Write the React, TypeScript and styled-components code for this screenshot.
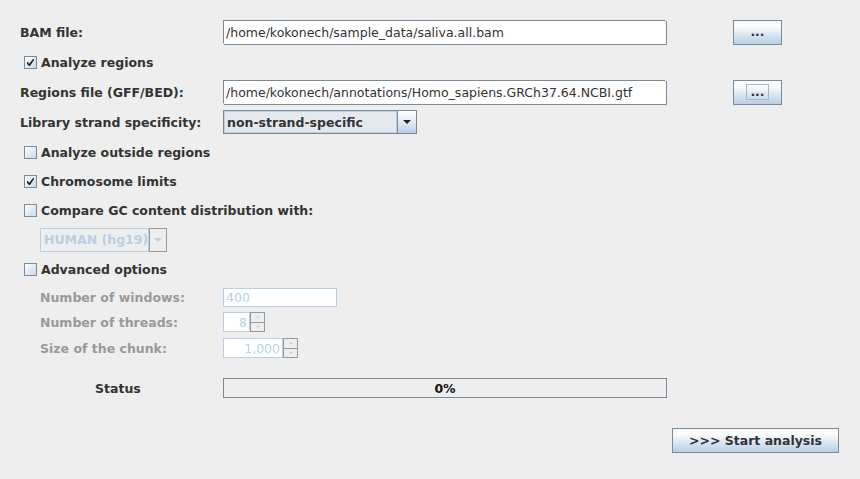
import styled, { createGlobalStyle } from "styled-components";

const GlobalStyle = createGlobalStyle`
  html, body {
    margin: 0;
    padding: 0;
    background: #eeeeee;
  }
  body {
    font-family: "DejaVu Sans", "Liberation Sans", sans-serif;
    font-size: 12.5px;
    color: #333333;
  }
`;

const Colors = {
  bg: "#eeeeee",
  text: "#333333",
  border: "#7a8a99",
  disabled: "#999999",
  disabledLight: "#b8cfe5",
};

const Panel = styled.div`
  width: 860px;
  height: 479px;
  box-sizing: border-box;
  padding: 17px 0 0 20px;
  display: flex;
  flex-direction: column;
`;

const Row = styled.div<{ $h: number; $indent?: number }>`
  height: ${(p) => p.$h}px;
  display: flex;
  align-items: center;
  padding-left: ${(p) => p.$indent ?? 0}px;
`;

const Label = styled.div<{ $disabled?: boolean; $w?: number }>`
  width: ${(p) => p.$w ?? 203}px;
  flex-shrink: 0;
  font-weight: bold;
  color: ${(p) => (p.$disabled ? Colors.disabled : Colors.text)};
  white-space: nowrap;
`;

const TextField = styled.div<{ $w: number; $disabled?: boolean; $right?: boolean }>`
  width: ${(p) => p.$w}px;
  height: 24px;
  box-sizing: border-box;
  background: #ffffff;
  border: 1px solid ${(p) => (p.$disabled ? Colors.disabledLight : Colors.border)};
  border-right-color: ${(p) => (p.$disabled ? Colors.disabledLight : "#ffffff")};
  border-bottom-color: ${(p) => (p.$disabled ? Colors.disabledLight : "#ffffff")};
  box-shadow: ${(p) => (p.$disabled ? "none" : `1px 1px 0 ${Colors.border}`)};
  display: flex;
  align-items: center;
  justify-content: ${(p) => (p.$right ? "flex-end" : "flex-start")};
  padding: 0 2px;
  color: ${(p) => (p.$disabled ? Colors.disabledLight : Colors.text)};
  white-space: nowrap;
  overflow: hidden;
`;

const BrowseButton = styled.div<{ $focused?: boolean }>`
  margin-left: 67px;
  width: 49px;
  height: 25px;
  box-sizing: border-box;
  border: 1px solid ${Colors.border};
  background: linear-gradient(#f7fafd 0%, #ffffff 20%, #dde8f3 55%, #b8cfe5 100%);
  display: flex;
  align-items: center;
  justify-content: center;
  font-weight: bold;
  color: ${Colors.text};

  span {
    padding: 0 3px;
    line-height: 14px;
    border: 1px solid ${(p) => (p.$focused ? "#a3b8cc" : "transparent")};
  }
`;

const CheckRow = styled.label<{ $indent?: number }>`
  display: flex;
  align-items: center;
  gap: 4px;
  padding-left: ${(p) => p.$indent ?? 4}px;
  font-weight: bold;
  color: ${Colors.text};
`;

const Box = styled.span`
  width: 13px;
  height: 13px;
  box-sizing: border-box;
  border: 1px solid ${Colors.border};
  background: linear-gradient(135deg, #ffffff 0%, #dde8f3 60%, #c9d9ea 100%);
  display: flex;
  align-items: center;
  justify-content: center;
`;

const CheckBox = ({ checked, label }: { checked?: boolean; label: string }) => (
  <CheckRow>
    <Box>
      {checked && (
        <svg width="11" height="11" viewBox="0 0 11 11">
          <path d="M2 5 L2 7 L4 9 L5 9 L9 3 L9 2 L8 2 L4 7 L3 5 Z" fill="#222" />
        </svg>
      )}
    </Box>
    {label}
  </CheckRow>
);

const Combo = styled.div<{ $w: number; $disabled?: boolean }>`
  width: ${(p) => p.$w}px;
  height: 24px;
  box-sizing: border-box;
  display: flex;
  border: 1px solid ${(p) => (p.$disabled ? Colors.disabledLight : Colors.border)};
`;

const ComboValue = styled.div<{ $disabled?: boolean }>`
  flex: 1;
  display: flex;
  align-items: center;
  padding-left: 3px;
  font-weight: bold;
  white-space: nowrap;
  color: ${(p) => (p.$disabled ? Colors.disabledLight : Colors.text)};
  background: ${(p) => (p.$disabled ? Colors.bg : "#e3e9ef")};
  box-shadow: inset 0 0 0 1px ${(p) => (p.$disabled ? Colors.bg : "#b8cfe5")};
  border-right: 1px solid ${(p) => (p.$disabled ? Colors.disabledLight : Colors.border)};
`;

const ComboArrow = styled.div<{ $disabled?: boolean }>`
  width: 18px;
  display: flex;
  align-items: center;
  justify-content: center;
  box-sizing: border-box;
  margin: ${(p) => (p.$disabled ? "-1px -1px -1px 0" : "0")};
  width: ${(p) => (p.$disabled ? 20 : 18)}px;
  border: ${(p) => (p.$disabled ? `1px solid ${Colors.disabled}` : "none")};
  background: ${(p) =>
    p.$disabled ? Colors.bg : "linear-gradient(#ffffff 0%, #dde8f3 55%, #b8cfe5 100%)"};

  &::after {
    content: "";
    border-left: 4px solid transparent;
    border-right: 4px solid transparent;
    border-top: 4px solid ${(p) => (p.$disabled ? Colors.disabledLight : "#222")};
  }
`;

const Spinner = styled.div`
  display: flex;
  height: 20px;
`;

const SpinButtons = styled.div`
  display: flex;
  flex-direction: column;
  width: 15px;
`;

const SpinButton = styled.div<{ $down?: boolean }>`
  flex: 1;
  box-sizing: border-box;
  border: 1px solid ${Colors.disabled};
  border-top-width: ${(p) => (p.$down ? 0 : 1)}px;
  background: ${Colors.bg};
  display: flex;
  align-items: center;
  justify-content: center;

  &::after {
    content: "";
    border-left: 2px solid transparent;
    border-right: 2px solid transparent;
    ${(p) =>
      p.$down
        ? `border-top: 2px solid ${Colors.disabledLight};`
        : `border-bottom: 2px solid ${Colors.disabledLight};`}
  }
`;

const Progress = styled.div`
  width: 444px;
  height: 20px;
  box-sizing: border-box;
  border: 1px solid ${Colors.border};
  background: ${Colors.bg};
  display: flex;
  align-items: center;
  justify-content: center;
  font-weight: bold;
  color: #111;
`;

const Footer = styled.div`
  margin-top: 26px;
  padding-right: 21px;
  display: flex;
  justify-content: flex-end;
`;

const StartButton = styled.div`
  width: 167px;
  height: 25px;
  box-sizing: border-box;
  border: 1px solid ${Colors.border};
  background: linear-gradient(#f7fafd 0%, #ffffff 20%, #dde8f3 55%, #b8cfe5 100%);
  display: flex;
  align-items: center;
  justify-content: center;
  font-weight: bold;
  color: ${Colors.text};
`;

const App = () => {
  return (
    <>
      <GlobalStyle />
      <Panel>
        <Row $h={30}>
          <Label>BAM file:</Label>
          <TextField $w={443}>/home/kokonech/sample_data/saliva.all.bam</TextField>
          <BrowseButton>
            <span>...</span>
          </BrowseButton>
        </Row>
        <Row $h={30}>
          <CheckBox checked label="Analyze regions" />
        </Row>
        <Row $h={30}>
          <Label>Regions file (GFF/BED):</Label>
          <TextField $w={443}>/home/kokonech/annotations/Homo_sapiens.GRCh37.64.NCBI.gtf</TextField>
          <BrowseButton $focused>
            <span>...</span>
          </BrowseButton>
        </Row>
        <Row $h={30}>
          <Label>Library strand specificity:</Label>
          <Combo $w={194}>
            <ComboValue>non-strand-specific</ComboValue>
            <ComboArrow />
          </Combo>
        </Row>
        <Row $h={30}>
          <CheckBox label="Analyze outside regions" />
        </Row>
        <Row $h={29}>
          <CheckBox checked label="Chromosome limits" />
        </Row>
        <Row $h={29}>
          <CheckBox label="Compare GC content distribution with:" />
        </Row>
        <Row $h={29} $indent={20}>
          <Combo $w={127} $disabled>
            <ComboValue $disabled>HUMAN (hg19)</ComboValue>
            <ComboArrow $disabled />
          </Combo>
        </Row>
        <Row $h={30}>
          <CheckBox label="Advanced options" />
        </Row>
        <Row $h={26} $indent={20}>
          <Label $disabled $w={183}>Number of windows:</Label>
          <TextField $w={114} $disabled style={{ height: 19 }}>400</TextField>
        </Row>
        <Row $h={24} $indent={20}>
          <Label $disabled $w={183}>Number of threads:</Label>
          <Spinner>
            <TextField $w={27} $disabled $right style={{ height: 20 }}>8</TextField>
            <SpinButtons>
              <SpinButton />
              <SpinButton $down />
            </SpinButtons>
          </Spinner>
        </Row>
        <Row $h={28} $indent={20}>
          <Label $disabled $w={183}>Size of the chunk:</Label>
          <Spinner>
            <TextField $w={60} $disabled $right style={{ height: 20 }}>1,000</TextField>
            <SpinButtons>
              <SpinButton />
              <SpinButton $down />
            </SpinButtons>
          </Spinner>
        </Row>
        <Row $h={28} $indent={75} style={{ marginTop: 12 }}>
          <Label $w={128}>Status</Label>
          <Progress>0%</Progress>
        </Row>
        <Footer>
          <StartButton>&gt;&gt;&gt; Start analysis</StartButton>
        </Footer>
      </Panel>
    </>
  );
};

export default App;
